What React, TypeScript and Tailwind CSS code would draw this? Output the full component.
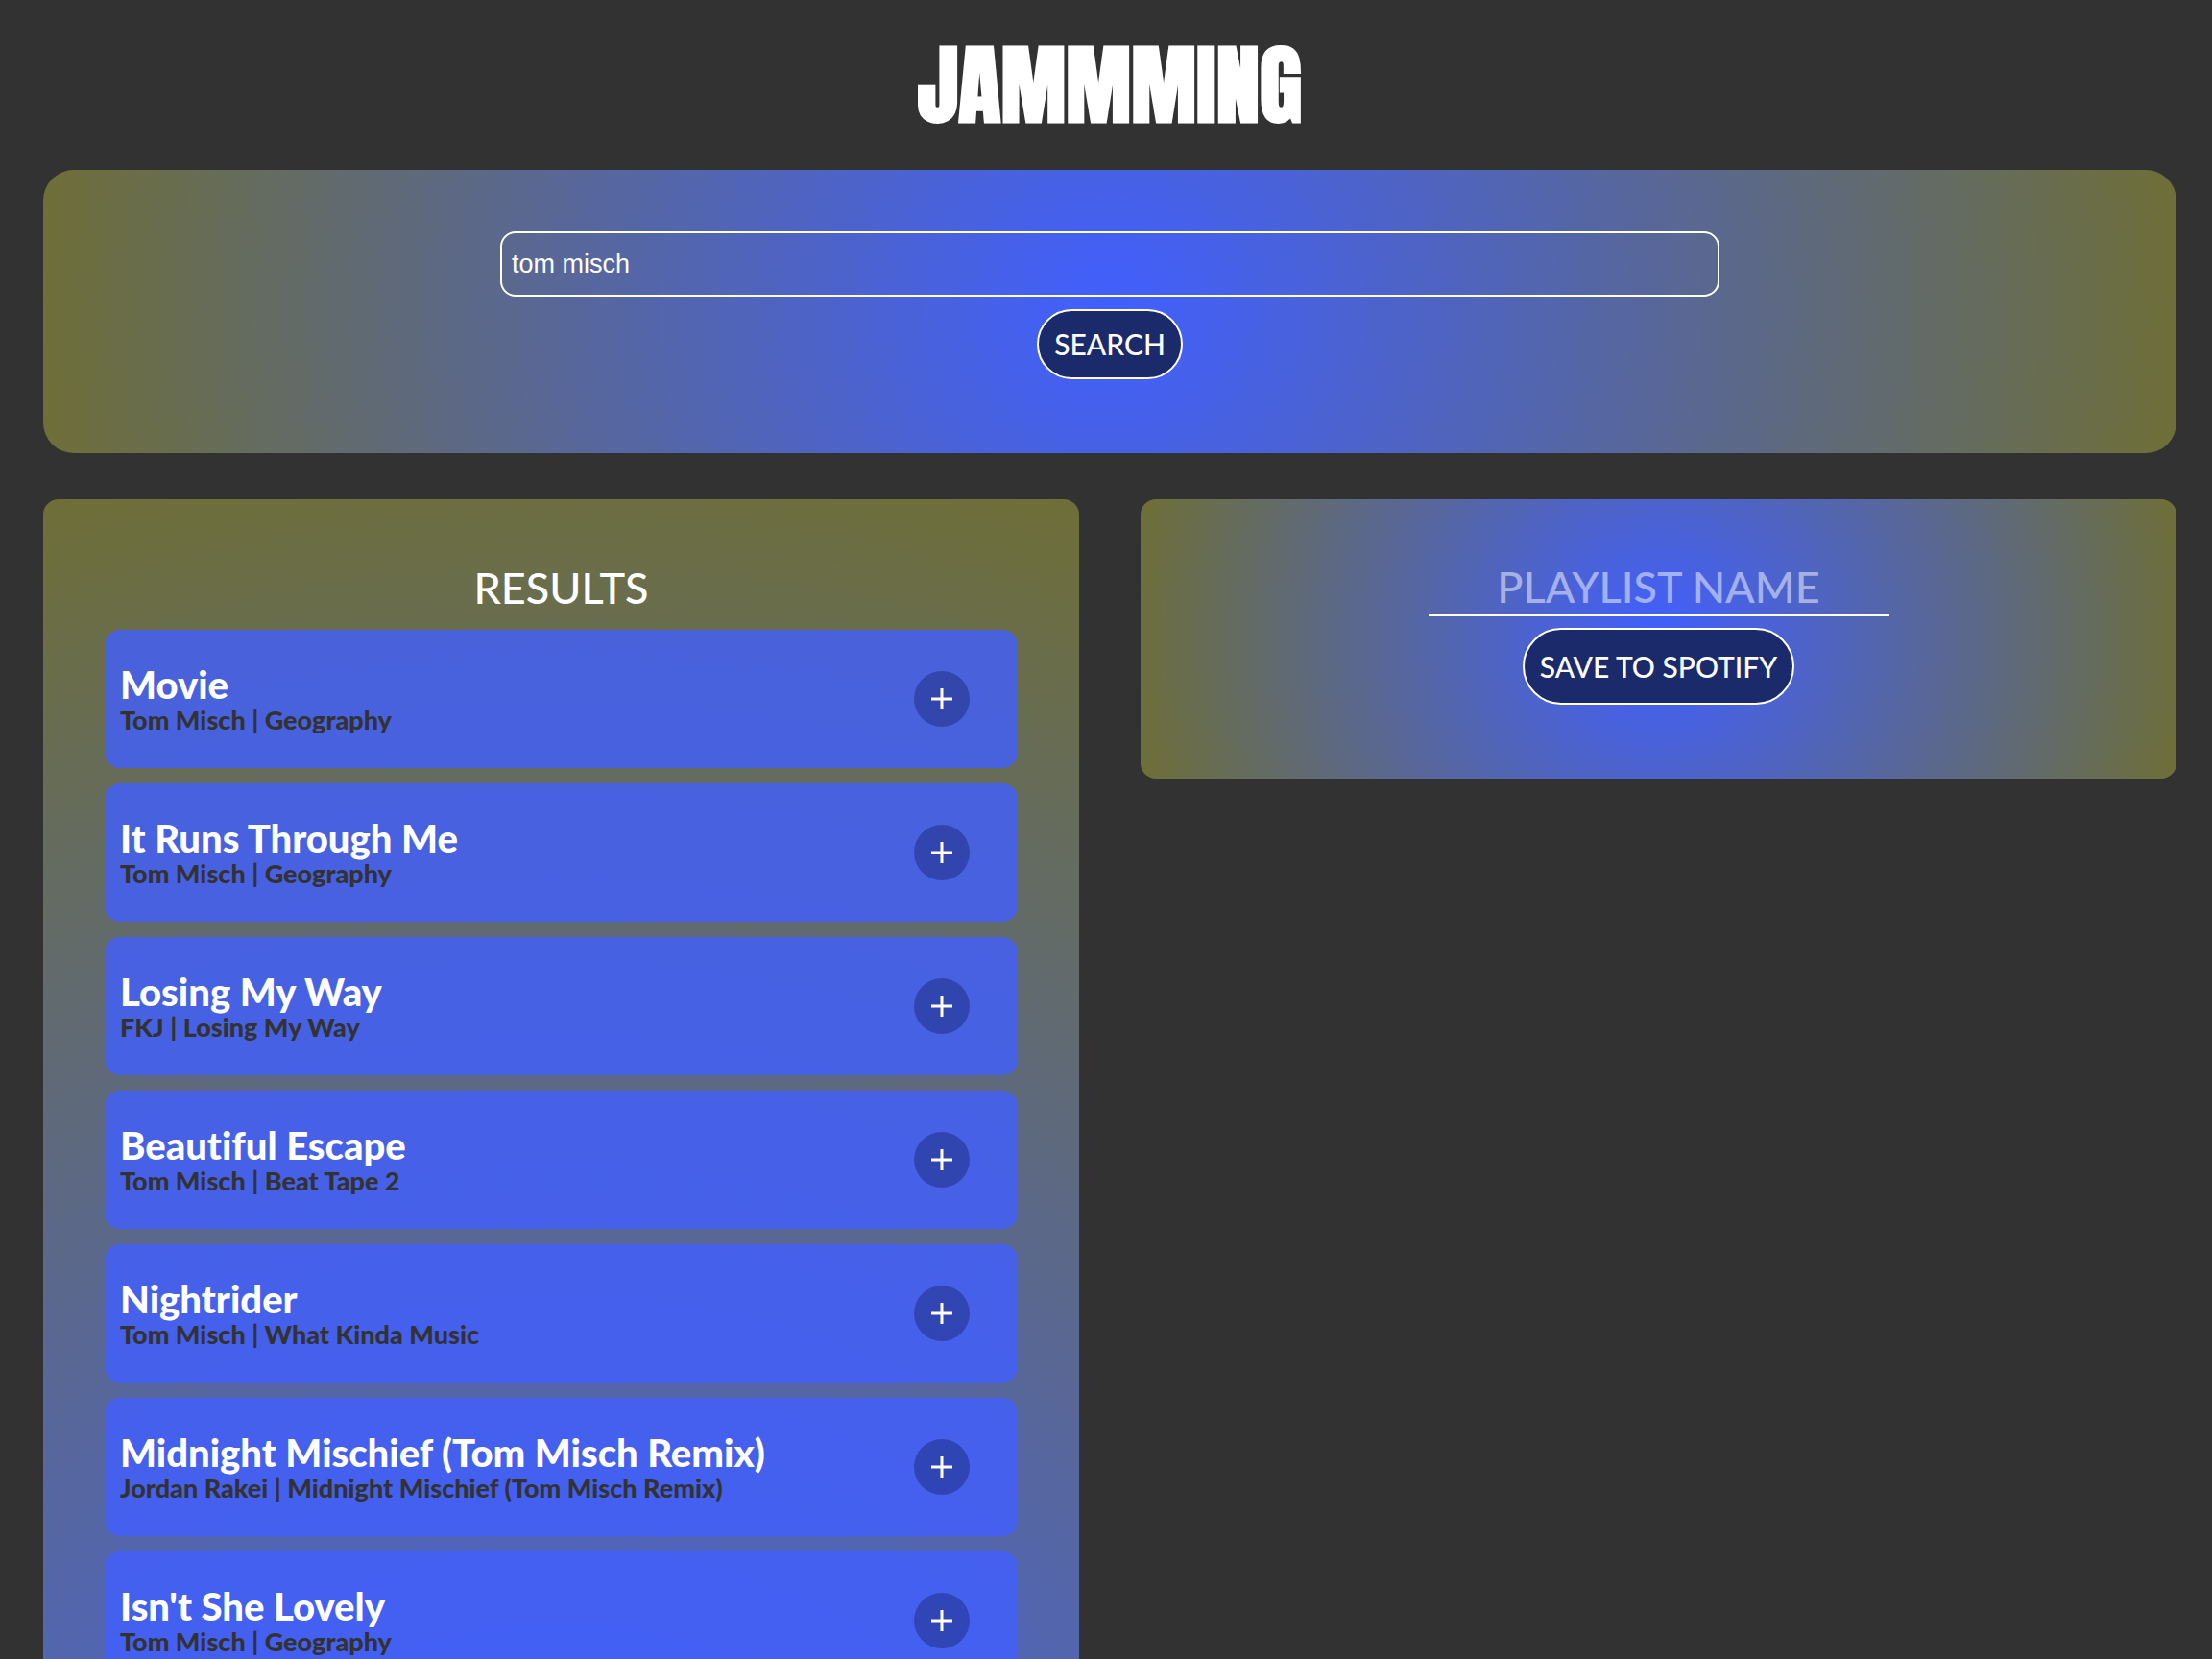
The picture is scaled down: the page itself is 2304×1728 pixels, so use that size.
import { useState } from "react";

const tracks = [
  { name: "Movie", artist: "Tom Misch", album: "Geography" },
  { name: "It Runs Through Me", artist: "Tom Misch", album: "Geography" },
  { name: "Losing My Way", artist: "FKJ", album: "Losing My Way" },
  { name: "Beautiful Escape", artist: "Tom Misch", album: "Beat Tape 2" },
  { name: "Nightrider", artist: "Tom Misch", album: "What Kinda Music" },
  {
    name: "Midnight Mischief (Tom Misch Remix)",
    artist: "Jordan Rakei",
    album: "Midnight Mischief (Tom Misch Remix)",
  },
  { name: "Isn't She Lovely", artist: "Tom Misch", album: "Geography" },
];

function Track({ name, artist, album }: { name: string; artist: string; album: string }) {
  return (
    <li className="flex h-36 items-center justify-between rounded-2xl bg-[#415fff]/80 pr-[50px] pl-4">
      <div className="pt-1">
        <h3 className="text-[40px] leading-10 font-black text-white">{name}</h3>
        <p className="text-[27px] leading-[34px] font-black text-[#323232]">
          {artist} | {album}
        </p>
      </div>
      <button
        type="button"
        aria-label={`Add ${name}`}
        className="flex size-[58px] items-center justify-center rounded-full bg-[#1b2a7b]/50 text-white"
      >
        <svg viewBox="0 0 22 22" className="size-[22px]" stroke="currentColor" strokeWidth="3">
          <path d="M11 0v22M0 11h22" />
        </svg>
      </button>
    </li>
  );
}

export default function App() {
  const [term, setTerm] = useState("tom misch");
  const [playlist, setPlaylist] = useState("");

  return (
    <div className="min-h-screen bg-[#323232] pr-[37px] pl-[45px] font-['Lato',sans-serif] text-white [font-variant-ligatures:none]">
      <header className="flex h-[177px] items-center justify-center">
        <h1 className="font-[Impact,Anton,'Roboto_Condensed','Open_Sans_Condensed',sans-serif] text-[91px] leading-none font-black">
          JAMMMING
        </h1>
      </header>

      <main>
        <form
          onSubmit={(e) => e.preventDefault()}
          className="flex flex-col items-center gap-[13px] rounded-[32px] bg-[radial-gradient(circle,#415fff,#6e6f37)] px-4 pt-16 pb-[77px]"
        >
          <input
            type="text"
            aria-label="Search"
            value={term}
            onChange={(e) => setTerm(e.target.value)}
            className="h-[68px] w-[58%] rounded-2xl border-2 border-white bg-transparent px-2.5 font-['Liberation_Sans',sans-serif] text-[27px] outline-none"
          />
          <button type="submit" className="h-[73px] rounded-full border-2 border-white bg-[#1b2a6b] px-4 text-[30px] font-medium">
            SEARCH
          </button>
        </form>

        <div className="mt-12 grid grid-cols-2 items-start gap-16">
          <section className="rounded-2xl bg-[radial-gradient(circle_1774px_at_50%_1690px,#415fff,#6e6f37)] p-16">
            <h2 className="mb-4 text-center text-[45px] leading-[56px] font-medium">RESULTS</h2>
            <ul className="flex flex-col gap-4">
              {tracks.map((t) => (
                <Track key={t.name} {...t} />
              ))}
            </ul>
          </section>

          <section className="flex flex-col items-center gap-3 rounded-2xl bg-[radial-gradient(circle,#415fff,#6e6f37)] px-16 pt-16 pb-[77px]">
            <input
              type="text"
              aria-label="Playlist name"
              placeholder="PLAYLIST NAME"
              value={playlist}
              onChange={(e) => setPlaylist(e.target.value)}
              className="h-[58px] w-[480px] max-w-full border-b-2 border-white bg-transparent text-center text-[45px] font-medium outline-none placeholder:text-white/50"
            />
            <button type="button" className="h-20 rounded-full border-2 border-white bg-[#1b2a6b] px-4 text-[30px] font-medium">
              SAVE TO SPOTIFY
            </button>
          </section>
        </div>
      </main>
    </div>
  );
}
